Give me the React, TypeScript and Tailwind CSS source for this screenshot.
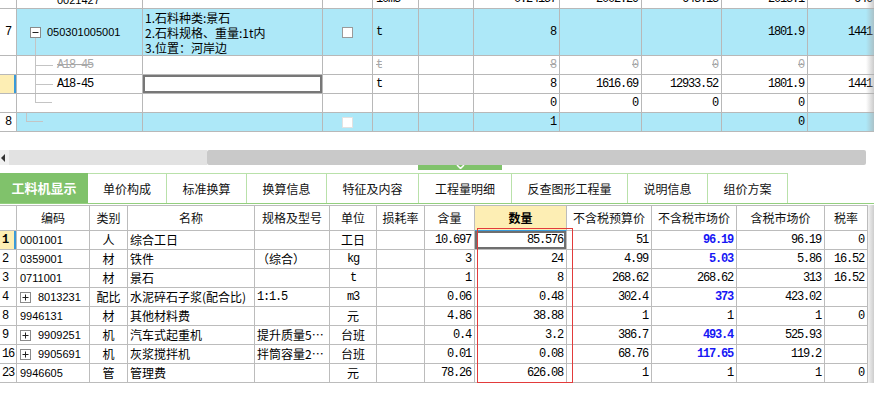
import React from 'react';

const NUM = "font-['Liberation_Mono',monospace] text-[12px] tracking-[-1.2px]";
const CJK = "font-['Noto_Sans_CJK_SC','Liberation_Sans',sans-serif] text-[12px]";
const SANS = "font-['Liberation_Sans',sans-serif] text-[11px]";

const TOP_COLS = 'grid grid-cols-[17px_126px_180px_50px_46px_55px_86px_82px_80px_86px_68px]';
const BOT_COLS = 'grid grid-cols-[17px_73px_38px_127px_75px_47px_48px_50px_92px_85px_85px_88px_43px]';

function Box({ plus }: { plus?: boolean }) {
  return (
    <svg width="11" height="11" viewBox="0 0 11 11" className="shrink-0">
      <rect x="0.5" y="0.5" width="10" height="10" fill="#fff" stroke="#8a8a8a" />
      <line x1="2.5" y1="5.5" x2="8.5" y2="5.5" stroke="#222" />
      {plus && <line x1="5.5" y1="2.5" x2="5.5" y2="8.5" stroke="#222" />}
    </svg>
  );
}

function T({ className = '', children }: { className?: string; children?: React.ReactNode }) {
  return (
    <div className={`relative flex overflow-hidden whitespace-nowrap border-r border-b border-[#b8b8b8] ${className}`}>
      {children}
    </div>
  );
}

const n = `items-center justify-end pr-[3px] ${NUM}`;
const ng = `items-center justify-end pr-[3px] text-[#a8a8a8] line-through ${NUM}`;
const blue = 'bg-[#ade8f8]';

function TopGrid() {
  return (
    <div className="relative h-[132px] overflow-hidden">
      {/* partial row at top */}
      <div className={`${TOP_COLS} h-[9px]`}>
        <T />
        <T className={`items-end pl-[40px] ${SANS}`}>0021427</T>
        <T />
        <T />
        <T className={`items-end pl-[3px] ${NUM}`}>10m3</T>
        <T />
        <T className={`items-end justify-end pr-[3px] ${NUM}`}>0.24157</T>
        <T className={`items-end justify-end pr-[3px] ${NUM}`}>2002.29</T>
        <T className={`items-end justify-end pr-[3px] ${NUM}`}>643.13</T>
        <T className={`items-end justify-end pr-[3px] ${NUM}`}>2013.1</T>
        <T className={`items-end justify-end pr-[3px] ${NUM}`}>646</T>
      </div>

      {/* row 7 */}
      <div className={`${TOP_COLS} h-[47px]`}>
        <T className={`items-center justify-center bg-white ${NUM}`}>7</T>
        <T className={`items-center gap-[6px] pl-[13px] ${blue} ${SANS}`}>
          <Box />
          <span>050301005001</span>
          <div className="absolute left-[18px] top-[29px] bottom-0 border-l border-[#c4c4c4]" />
        </T>
        <T className={`flex-col justify-center pl-[2px] leading-[15px] ${blue} ${CJK}`}>
          <span>1.石料种类:景石</span>
          <span>2.石料规格、重量:1t内</span>
          <span>3.位置：河岸边</span>
        </T>
        <T className={`items-center justify-center ${blue}`}>
          <span className="w-[11px] h-[11px] border border-[#9a9a9a] bg-white" />
        </T>
        <T className={`items-center pl-[3px] ${blue} ${NUM}`}>t</T>
        <T className={blue} />
        <T className={`${n} ${blue}`}>8</T>
        <T className={blue} />
        <T className={blue} />
        <T className={`${n} ${blue}`}>1801.9</T>
        <T className={`${n} ${blue}`}>1441</T>
      </div>

      {/* A18-45 deleted */}
      <div className={`${TOP_COLS} h-[19px]`}>
        <T />
        <T className={`items-center pl-[40px] text-[#a8a8a8] line-through ${NUM}`}>
          <div className="absolute left-[18px] top-0 bottom-0 border-l border-[#c4c4c4]" />
          <div className="absolute left-[18px] top-[9px] w-[18px] border-t border-[#c4c4c4]" />
          A18-45
        </T>
        <T />
        <T />
        <T className={`items-center pl-[3px] text-[#a8a8a8] line-through ${NUM}`}>t</T>
        <T />
        <T className={ng}>8</T>
        <T className={ng}>0</T>
        <T className={ng}>0</T>
        <T className={ng}>0</T>
        <T />
      </div>

      {/* A18-45 */}
      <div className={`${TOP_COLS} h-[19px]`}>
        <T className="bg-[#fdeeb4] shadow-[inset_-2px_0_0_#3a9ad8]" />
        <T className={`items-center pl-[40px] ${NUM}`}>
          <div className="absolute left-[18px] top-0 bottom-0 border-l border-[#c4c4c4]" />
          <div className="absolute left-[18px] top-[9px] w-[18px] border-t border-[#c4c4c4]" />
          A18-45
        </T>
        <T className="shadow-[inset_0_0_0_2px_#777]" />
        <T />
        <T className={`items-center pl-[3px] ${NUM}`}>t</T>
        <T />
        <T className={n}>8</T>
        <T className={n}>1616.69</T>
        <T className={n}>12933.52</T>
        <T className={n}>1801.9</T>
        <T className={n}>1441</T>
      </div>

      {/* empty row */}
      <div className={`${TOP_COLS} h-[19px]`}>
        <T />
        <T>
          <div className="absolute left-[18px] top-0 h-[9px] w-[17px] border-l border-b border-[#c4c4c4]" />
        </T>
        <T />
        <T />
        <T />
        <T />
        <T className={n}>0</T>
        <T className={n}>0</T>
        <T className={n}>0</T>
        <T className={n}>0</T>
        <T />
      </div>

      {/* row 8 */}
      <div className={`${TOP_COLS} h-[19px]`}>
        <T className={`items-center justify-center bg-white ${NUM}`}>8</T>
        <T className={blue}>
          <div className="absolute left-[9px] top-0 h-[9px] w-[17px] border-l border-b border-[#c4c4c4]" />
        </T>
        <T className={blue} />
        <T className={`items-center justify-center ${blue}`}>
          <span className="w-[11px] h-[11px] border border-[#e2e2e2] bg-white" />
        </T>
        <T className={blue} />
        <T className={blue} />
        <T className={`${n} ${blue}`}>1</T>
        <T className={blue} />
        <T className={blue} />
        <T className={`${n} ${blue}`}>0</T>
        <T className={blue} />
      </div>

      {/* vertical scrollbar edge */}
      <div className="absolute right-0 top-0 h-[131px] w-[8px] bg-linear-to-r from-[#ffffff00] to-[#a8a8a8]/60" />
    </div>
  );
}

const tabs = ['单价构成', '标准换算', '换算信息', '特征及内容', '工程量明细', '反查图形工程量', '说明信息', '组价方案'];
const tabW = ['w-[79px]', 'w-[80px]', 'w-[80px]', 'w-[92px]', 'w-[93px]', 'w-[116px]', 'w-[80px]', 'w-[80px]'];

function Tabs() {
  return (
    <div className="flex h-[31px] border-b border-[#93cf7e]">
      <div className={`w-[88px] flex items-center justify-center bg-[#80c26b] text-white font-bold text-[13px] ${CJK}`}>
        工料机显示
      </div>
      {tabs.map((t, i) => (
        <div
          key={t}
          className={`${tabW[i]} flex items-center justify-center border-t border-r border-[#b9e1aa] text-[#111] ${CJK}`}
        >
          {t}
        </div>
      ))}
    </div>
  );
}

type Row = {
  no: string;
  code: string;
  plus?: boolean;
  type: string;
  name: string;
  spec: string;
  unit: string;
  hl: string;
  qty: string;
  budget: string;
  market: string;
  blue?: boolean;
  tax: string;
  rate: string;
};

const rows: Row[] = [
  { no: '1', code: '0001001', type: '人', name: '综合工日', spec: '', unit: '工日', hl: '10.697', qty: '85.576', budget: '51', market: '96.19', blue: true, tax: '96.19', rate: '0' },
  { no: '2', code: '0359001', type: '材', name: '铁件', spec: '（综合）', unit: 'kg', hl: '3', qty: '24', budget: '4.99', market: '5.03', blue: true, tax: '5.86', rate: '16.52' },
  { no: '3', code: '0711001', type: '材', name: '景石', spec: '', unit: 't', hl: '1', qty: '8', budget: '268.62', market: '268.62', tax: '313', rate: '16.52' },
  { no: '4', code: '8013231', plus: true, type: '配比', name: '水泥碎石子浆(配合比)', spec: '1:1.5', unit: 'm3', hl: '0.06', qty: '0.48', budget: '302.4', market: '373', blue: true, tax: '423.02', rate: '' },
  { no: '8', code: '9946131', type: '材', name: '其他材料费', spec: '', unit: '元', hl: '4.86', qty: '38.88', budget: '1', market: '1', tax: '1', rate: '0' },
  { no: '9', code: '9909251', plus: true, type: '机', name: '汽车式起重机', spec: '提升质量5…', unit: '台班', hl: '0.4', qty: '3.2', budget: '386.7', market: '493.4', blue: true, tax: '525.93', rate: '' },
  { no: '16', code: '9905691', plus: true, type: '机', name: '灰浆搅拌机', spec: '拌筒容量2…', unit: '台班', hl: '0.01', qty: '0.08', budget: '68.76', market: '117.65', blue: true, tax: '119.2', rate: '' },
  { no: '23', code: '9946605', type: '管', name: '管理费', spec: '', unit: '元', hl: '78.26', qty: '626.08', budget: '1', market: '1', tax: '1', rate: '0' },
];

const heads = ['', '编码', '类别', '名称', '规格及型号', '单位', '损耗率', '含量', '数量', '不含税预算价', '不含税市场价', '含税市场价', '税率'];

function B({ className = '', children }: { className?: string; children?: React.ReactNode }) {
  return (
    <div className={`flex items-center overflow-hidden whitespace-nowrap border-r border-b border-[#bcbcbc] ${className}`}>
      {children}
    </div>
  );
}

const bn = `justify-end pr-[3px] ${NUM}`;

function MaterialTable() {
  return (
    <div className="relative flex">
      <div className="w-[868px] border-t border-[#bcbcbc]">
        <div className={`${BOT_COLS} h-[25px]`}>
          {heads.map((h, i) =>
            h === '数量' ? (
              <B key={i} className={`justify-center bg-[#fdeeb4] font-bold border-b-[#3a9ad8] ${CJK}`}>{h}</B>
            ) : (
              <B key={i} className={`justify-center text-[#111] ${CJK}`}>{h}</B>
            )
          )}
        </div>
        {rows.map((r, i) => (
          <div key={r.no} className={`${BOT_COLS} h-[19px]`}>
            {i === 0 ? (
              <B className={`pl-[2px] bg-[#fdeeb4] font-bold shadow-[inset_-2px_0_0_#3a9ad8] ${NUM}`}>{r.no}</B>
            ) : (
              <B className={`pl-[2px] ${NUM}`}>{r.no}</B>
            )}
            <B className={`pl-[3px] gap-[7px] ${SANS}`}>
              {r.plus && <Box plus />}
              {r.code}
            </B>
            <B className={`justify-center ${CJK}`}>{r.type}</B>
            <B className={`pl-[2px] ${CJK}`}>{r.name}</B>
            <B className={`pl-[2px] ${/^[0-9:.]+$/.test(r.spec) ? NUM : CJK}`}>{r.spec}</B>
            <B className={`justify-center ${/^[a-z0-9]+$/.test(r.unit) ? NUM : CJK}`}>{r.unit}</B>
            <B />
            <B className={bn}>{r.hl}</B>
            <B className={`${bn} ${i === 0 ? 'shadow-[inset_0_0_0_2px_#6f6f6f]' : ''}`}>{r.qty}</B>
            <B className={bn}>{r.budget}</B>
            <B className={`${bn} ${r.blue ? 'text-[#1717f5] font-bold' : ''}`}>{r.market}</B>
            <B className={bn}>{r.tax}</B>
            <B className={bn}>{r.rate}</B>
          </div>
        ))}
      </div>
      <div className="w-[6px] h-[178px] bg-linear-to-r from-[#f2f2f2] to-[#cdcdcd]" />
      {/* highlighted column */}
      <div className="absolute left-[477px] top-[23px] w-[96px] h-[155px] border border-[#e23b3b] pointer-events-none" />
    </div>
  );
}

export default function App() {
  return (
    <div className="w-[874px] h-[398px] overflow-hidden bg-white text-black">
      <TopGrid />

      <div className="h-[18px]" />

      {/* horizontal scrollbar */}
      <div className="flex h-[15px]">
        <div className="w-[9px] bg-[#f0f0f0] flex items-center justify-start pl-[1px]">
          <svg width="5" height="8" viewBox="0 0 5 8">
            <polygon points="4,0 4,8 0,4" fill="#333" />
          </svg>
        </div>
        <div className="w-[198px] bg-[#e2e2e2]" />
        <div className="w-[659px] bg-[#c9c9c9] rounded-[2px]" />
      </div>

      {/* splitter handle */}
      <div className="h-[5px] flex">
        <div className="ml-[418px] w-[84px] bg-[#80c26b] flex justify-center">
          <svg width="9" height="4" viewBox="0 0 9 4">
            <polyline points="1,0 4.5,3.5 8,0" fill="none" stroke="#fff" strokeWidth="1.5" />
          </svg>
        </div>
      </div>

      <div className="h-[3px]" />
      <Tabs />
      <div className="h-[1px]" />
      <MaterialTable />
    </div>
  );
}
